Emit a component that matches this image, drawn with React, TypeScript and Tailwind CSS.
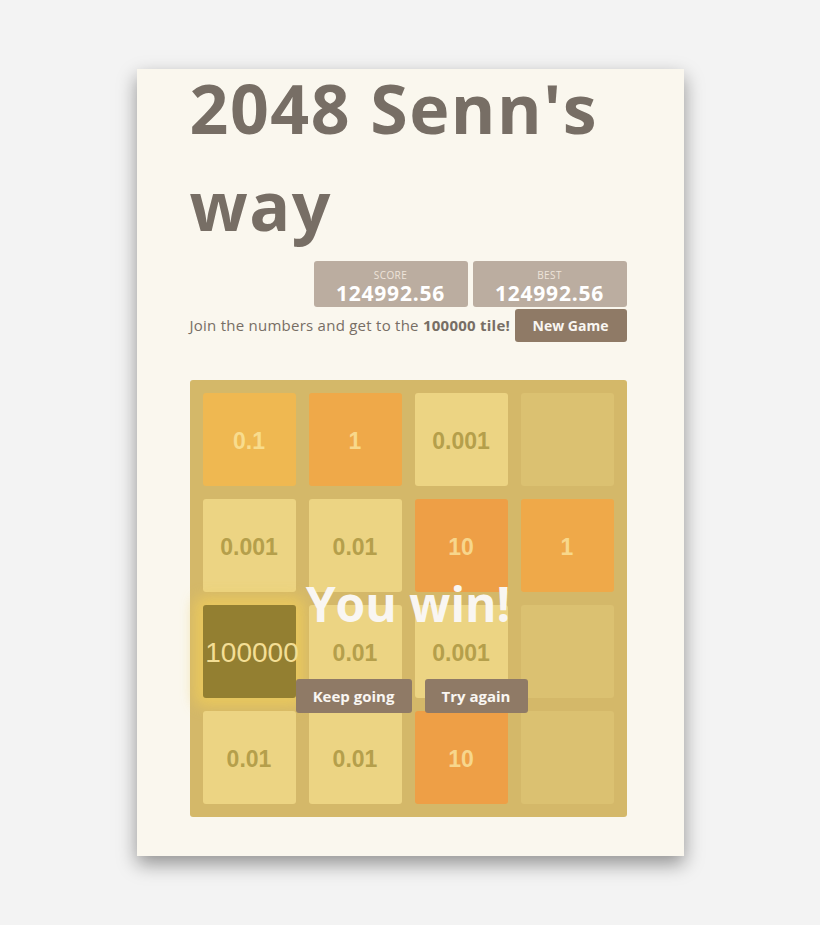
import React from 'react';

type Tile = { value: string; bg: string; text: string; glow?: boolean } | null;

const light = { bg: 'bg-[#ecd483]', text: 'text-[#b59f4b]' };

const board: Tile[][] = [
    [
        { value: '0.1', bg: 'bg-[#efb851]', text: 'text-[#f8dc8d]' },
        { value: '1', bg: 'bg-[#efa949]', text: 'text-[#f8d88b]' },
        { value: '0.001', ...light },
        null,
    ],
    [
        { value: '0.001', ...light },
        { value: '0.01', ...light },
        { value: '10', bg: 'bg-[#ee9f46]', text: 'text-[#f7d68c]' },
        { value: '1', bg: 'bg-[#efa949]', text: 'text-[#f8d88b]' },
    ],
    [
        { value: '100000', bg: 'bg-[#937f31]', text: 'text-[#f3de95]', glow: true },
        { value: '0.01', ...light },
        { value: '0.001', ...light },
        null,
    ],
    [
        { value: '0.01', ...light },
        { value: '0.01', ...light },
        { value: '10', bg: 'bg-[#ee9f46]', text: 'text-[#f7d68c]' },
        null,
    ],
];

const ScoreBox = ({ label, value }: { label: string; value: string }) => (
    <div className="w-[154px] h-[46px] rounded-[3px] bg-[#bbada0] flex flex-col items-center pt-[8px]">
        <span className="text-[10px] leading-[12px] text-[#eee4da] uppercase tracking-[0.4px]">{label}</span>
        <span className="text-[21px] leading-[24px] font-bold text-white tracking-[0.8px]">{value}</span>
    </div>
);

const App = () => {
    return (
        <div className="min-h-[925px] w-full bg-[#f3f3f3] pt-[69px] font-['Open_Sans',sans-serif]">
            <div className="mx-auto w-[547px] h-[787px] bg-[#faf7ee] pl-[53px] pr-[57px] shadow-[0_8px_18px_rgba(0,0,0,0.4)] overflow-hidden">
                {/* Heading */}
                <h1 className="text-[68px] leading-[97px] font-bold text-[#776e65] -mt-[10px] tracking-[1.5px] whitespace-pre-line">
                    {"2048 Senn's\nway"}
                </h1>

                {/* Scores */}
                <div className="flex justify-end gap-[5px] mt-[8px]">
                    <ScoreBox label="Score" value="124992.56" />
                    <ScoreBox label="Best" value="124992.56" />
                </div>

                <div className="flex items-center justify-between mt-[2px]">
                    <p className="text-[15px] text-[#776e65] tracking-[0.25px]">
                        Join the numbers and get to the <strong>100000 tile!</strong>
                    </p>
                    <button className="w-[112px] h-[33px] rounded-[3px] bg-[#8f7a66] text-[#f9f6f2] text-[14px] font-bold">
                        New Game
                    </button>
                </div>

                {/* Board */}
                <div className="relative mt-[38px] w-[437px] h-[437px] rounded-[3px] bg-[#d4b869] p-[13px] grid grid-cols-4 grid-rows-4 gap-[13px]">
                    {board.flat().map((tile, i) =>
                        tile ? (
                            <div
                                key={i}
                                className={`rounded-[3px] flex items-center justify-center pt-[3px] font-['Liberation_Sans',sans-serif] font-bold ${tile.bg} ${tile.text} ${
                                    tile.glow
                                        ? 'shadow-[0_0_14px_8px_rgba(240,205,90,0.75)] text-[28px] pl-[6px]'
                                        : 'text-[23px]'
                                }`}
                            >
                                {tile.glow ? <span className="font-normal">{tile.value}</span> : tile.value}
                            </div>
                        ) : (
                            <div key={i} className="rounded-[3px] bg-[#dbc171]" />
                        )
                    )}

                    {/* Win message */}
                    <div className="absolute inset-0 flex flex-col items-center">
                        <p className="mt-[194px] text-[48px] leading-[60px] font-bold text-[#f9f6f2]">
                            You win!
                        </p>
                        <div className="flex gap-[13px] mt-[45px] ml-[7px]">
                            <button className="w-[116px] h-[34px] rounded-[3px] bg-[#8f7a66] text-[#f9f6f2] text-[15px] font-bold">
                                Keep going
                            </button>
                            <button className="w-[103px] h-[34px] rounded-[3px] bg-[#8f7a66] text-[#f9f6f2] text-[15px] font-bold">
                                Try again
                            </button>
                        </div>
                    </div>
                </div>
            </div>
        </div>
    );
};

export default App;
